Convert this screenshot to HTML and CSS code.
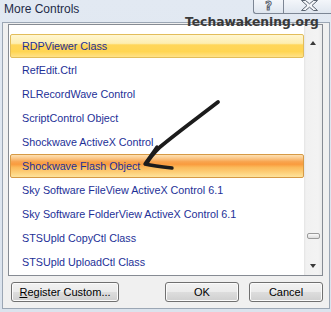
FILE: index.html
```html
<!DOCTYPE html>
<html>
<head>
<meta charset="utf-8">
<link rel="stylesheet" href="styles.css">
</head>
<body>
<div class="titlebar">
  <div class="title">More Controls</div>
  <div class="caption-btns">
    <div class="cbtn help">?</div>
    <div class="cbtn close">
      <svg width="17" height="11" viewBox="0 0 17 11"><polygon points="0.5,0.5 4.5,0.5 8.5,3.8 12.5,0.5 16.5,0.5 11,5.5 16.5,10.5 12.5,10.5 8.5,7.2 4.5,10.5 0.5,10.5 6,5.5" fill="#f4f6f9" stroke="#5b6471" stroke-width="1" stroke-linejoin="round"/></svg>
    </div>
  </div>
</div>
<div class="client">
  <div class="listbox">
    <div class="items">
      <div class="row hover">RDPViewer Class</div>
      <div class="row">RefEdit.Ctrl</div>
      <div class="row">RLRecordWave Control</div>
      <div class="row">ScriptControl Object</div>
      <div class="row">Shockwave ActiveX Control</div>
      <div class="row selected">Shockwave Flash Object</div>
      <div class="row">Sky Software FileView ActiveX Control 6.1</div>
      <div class="row">Sky Software FolderView ActiveX Control 6.1</div>
      <div class="row">STSUpld CopyCtl Class</div>
      <div class="row">STSUpld UploadCtl Class</div>
    </div>
    <div class="scrollbar">
      <div class="arrow up"></div>
      <div class="track"></div>
      <div class="thumb"></div>
      <div class="arrow down"></div>
    </div>
  </div>
  <div class="buttons">
    <div class="btn register"><u>R</u>egister Custom...</div>
    <div class="btn ok">OK</div>
    <div class="btn cancel">Cancel</div>
  </div>
</div>
<div class="watermark">Techawakening.org</div>
<svg class="arrow-overlay" width="331" height="312" viewBox="0 0 331 312">
  <path d="M218 102 C 200 116, 178 132, 160 147 C 155 152, 150 157, 147 163" fill="none" stroke="#1c1c1c" stroke-width="3.8" stroke-linecap="round" stroke-linejoin="round"/>
  <path d="M157 147 C 153 153, 149 158, 145 164 C 153 166, 162 167, 172 168" fill="none" stroke="#1c1c1c" stroke-width="3.4" stroke-linecap="round" stroke-linejoin="round"/>
</svg>
</body>
</html>
```
FILE: styles.css
```css
html, body {
  margin: 0;
  padding: 0;
}
body {
  width: 331px;
  height: 312px;
  overflow: hidden;
  position: relative;
  background: linear-gradient(#e2e9f2, #dbe3ed);
  font-family: "Liberation Sans", Arial, sans-serif;
}
.titlebar {
  height: 22px;
  display: flex;
  align-items: flex-start;
}
.title {
  padding: 2px 0 0 4px;
  font-size: 12px;
  line-height: 15px;
  color: #1e2b48;
}
.caption-btns {
  margin-left: auto;
  display: flex;
}
.cbtn {
  height: 14px;
  box-sizing: border-box;
  border: 1px solid #7c8694;
  border-top: none;
  background: linear-gradient(#f3f6fa, #dfe6ef);
  text-align: center;
}
.cbtn.help {
  width: 30px;
  border-radius: 0 0 0 3px;
  border-right: none;
  font-family: "DejaVu Sans", sans-serif;
  font-weight: bold;
  font-size: 11.5px;
  line-height: 13px;
  color: #f2f5f9;
  -webkit-text-stroke: 1px #5b6471;
}
.cbtn.close {
  width: 48px;
  border-right: none;
  padding: 0 0 0 3px;
  box-sizing: border-box;
  display: flex;
  justify-content: center;
  align-items: flex-start;
}
.cbtn.close svg {
  display: block;
}
.client {
  margin: 0 1px 0 2px;
  height: 287px;
  box-sizing: border-box;
  border: 1px solid #9ba6b4;
  background: #f0f0f0;
}
.listbox {
  margin: 1px 0 0 5px;
  width: 315px;
  height: 252px;
  box-sizing: border-box;
  border: 1px solid #868b93;
  background: #ffffff;
  display: flex;
}
.items {
  width: 295px;
  padding: 9px 0 0 1px;
  box-sizing: border-box;
}
.row {
  height: 24px;
  line-height: 22px;
  padding-left: 11px;
  box-sizing: border-box;
  border: 1px solid transparent;
  border-radius: 2px;
  font-size: 10.75px;
  color: #1d3097;
  white-space: nowrap;
}
.row.hover {
  border-color: #e2bd5a;
  background: linear-gradient(#fff6d2 0%, #fdeeb0 38%, #ffd65a 45%, #ffd552 75%, #ffe288 100%);
}
.row.selected {
  border-color: #d69a45;
  background: linear-gradient(#fde0b2 0%, #fbc98c 14%, #f8a550 30%, #f99b3e 42%, #fbb95a 56%, #fdd07a 80%, #fee39c 100%);
}
.scrollbar {
  width: 18px;
  margin-left: auto;
  display: flex;
  flex-direction: column;
  align-items: center;
  background: linear-gradient(to right, #e4e4e4 0px, #f1f1f1 2px, #f3f3f3 14px, #ebebeb 18px);
}
.arrow {
  width: 0;
  height: 0;
  border-left: 3.5px solid transparent;
  border-right: 3.5px solid transparent;
}
.arrow.up {
  margin-top: 16px;
  border-bottom: 4px solid #3a3a3a;
}
.arrow.down {
  margin-bottom: 7px;
  border-top: 4px solid #3a3a3a;
}
.track {
  flex: 1;
}
.thumb {
  width: 13px;
  height: 6px;
  box-sizing: border-box;
  border: 1px solid #9a9a9a;
  border-radius: 2px;
  background: linear-gradient(#fafafa, #dcdcdc);
  margin-bottom: 25px;
  margin-left: 1px;
}
.buttons {
  display: flex;
  margin-top: 6px;
  padding: 0 6px 0 8px;
}
.btn {
  height: 20px;
  box-sizing: border-box;
  border: 1px solid #707070;
  border-radius: 3px;
  background: linear-gradient(#f2f2f2 0%, #ebebeb 48%, #dddddd 52%, #cfcfcf 100%);
  box-shadow: inset 0 0 0 1px #fbfbfb;
  font-size: 11px;
  line-height: 18px;
  text-align: center;
  color: #000;
}
.btn.register {
  width: 108px;
}
.btn.ok {
  width: 74px;
  margin-left: auto;
}
.btn.cancel {
  width: 74px;
  margin-left: 10px;
}
.watermark {
  position: absolute;
  left: 185px;
  top: 16px;
  font-family: "DejaVu Sans", sans-serif;
  font-weight: bold;
  font-size: 12.3px;
  line-height: 13px;
  color: #3a3a3a;
  white-space: nowrap;
}
.arrow-overlay {
  position: absolute;
  left: 0;
  top: 0;
  pointer-events: none;
}
```
